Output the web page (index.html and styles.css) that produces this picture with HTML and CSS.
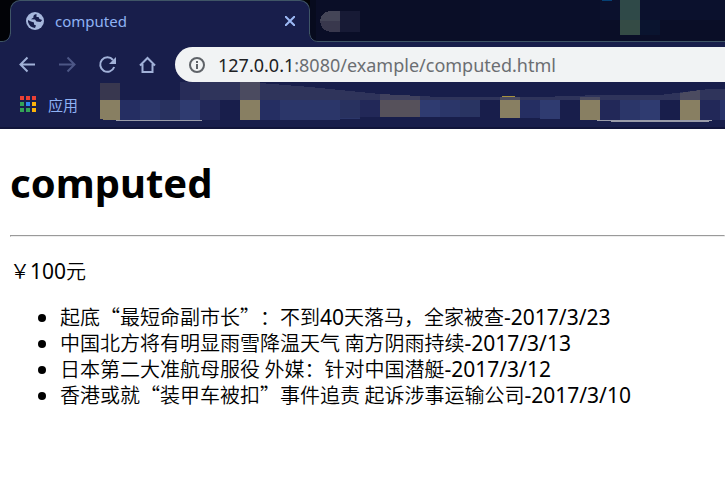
FILE: index.html
```html
<!DOCTYPE html>
<html lang="zh-CN">
<head>
<meta charset="utf-8">
<title>computed</title>
<link rel="stylesheet" href="styles.css">
</head>
<body>
<header class="browser">
  <div class="tabstrip">
    <svg class="strip-art" width="725" height="42" viewBox="0 0 725 42" shape-rendering="crispEdges" aria-hidden="true">
      <path fill="#070b1e" d="M310 0H725V41H310z"/>
      <path fill="#0a0e27" d="M316 0H480V41H316z"/>
      <path fill="#0a0f2a" d="M480 0H600V41H480z"/>
      <path fill="#0b112d" d="M600 0H725V20H600z"/>
      <path fill="#0a0e27" d="M600 20H725V41H600z"/>
      <path fill="#444557" d="M340 11V21H320C320 15 325 11 331 11z"/>
      <path fill="#39384d" d="M340 21V32H331C325 32 320 27 320 21z"/>
      <path fill="#171a35" d="M340 11H360V32H340z"/>
      <path fill="#2f4948" d="M620 0H640V20H620z"/>
      <path fill="#344b45" d="M620 20H640V35H620z"/>
      <path fill="#0a142f" d="M640 20H660V35H640z"/>
      <path fill="#064175" d="M602 0H612V1H602z"/>
      <g shape-rendering="auto">
        <path fill="#181e4b" d="M0 42C6 42 10 38 10 32L12 32V42zM309 32C309 38 313 42 320 42H308z"/>
        <path fill="none" stroke="#3f5566" d="M0 41.500H2C7 41.500 10.500 38 10.500 32M309.500 32C309.500 38 313 41.500 318 41.500H725"/>
      </g>
    </svg>
    <div class="tab">
      <svg width="18" height="18" viewBox="0 0 18 18" aria-hidden="true">
        <circle cx="9" cy="9" r="9" fill="#a6b7dc"/>
        <path fill="#181e4b" d="M10.500 2C8 2.500 7 3.500 7.500 5.500L5 7.200 9 7.500 10.500 9.500 14.500 10 16.200 8 13.500 7 12.500 5 10.500 5zM2 8 2 10C3 13.500 5 15.500 9 16L10 13.500 8 12.500 8 10.500 5 9.500z"/>
      </svg>
      <span class="tab-title">computed</span>
      <button class="close" aria-label="关闭"><svg width="10" height="10" viewBox="0 0 10 10"><path d="M0 0 10 10M10 0 0 10" stroke="#9cb9f5" stroke-width="2"/></svg></button>
    </div>
  </div>
  <nav class="toolbar">
    <button class="nav" aria-label="后退"><svg width="20" height="20" viewBox="0 0 20 20"><path d="M17 9.500H3M9.500 2.500 2.500 9.500l7 7"/></svg></button>
    <button class="nav" aria-label="前进" disabled><svg width="20" height="20" viewBox="0 0 20 20"><path d="M1 9.500H16M9.500 2.500l7 7-7 7"/></svg></button>
    <button class="nav" aria-label="重新加载"><svg width="20" height="20" viewBox="0 0 20 20"><path d="M15 5A7.200 7.200 0 1 0 16.200 12"/><path class="solid" d="M18 2V9H11z"/></svg></button>
    <button class="nav" aria-label="主页"><svg width="20" height="20" viewBox="0 0 20 20"><path d="M2 10.500 9.500 3l7.500 7.500M4.500 9V17H14.500V9"/></svg></button>
    <div class="address">
      <svg width="18" height="18" viewBox="0 0 18 18" aria-hidden="true"><circle cx="9" cy="9" r="7" fill="none" stroke="#5f6368" stroke-width="2"/><path d="M8 5h2v2H8zM8 8h2v5H8z" fill="#5f6368"/></svg>
      <a class="url" href="#"><span class="host">127.0.0.1</span>:8080/example/computed.html</a>
    </div>
  </nav>
  <div class="bookmarks">
    <svg class="mosaic" width="725" height="46" viewBox="0 0 725 46" shape-rendering="crispEdges" aria-hidden="true">
      <path fill="#38374f" d="M100 1H120V18H100z"/>
      <path fill="#272c58" d="M180 0H200V18H180z"/>
      <path fill="#2f345b" d="M200 0H240V18H200z"/>
      <path fill="#2f345b" d="M260 1 310 5 380 12 440 15H540L600 13H660L700 8 710 7H725V18H260z"/>
      <path fill="#4b4b60" d="M240 0H260V18H240zM500 15H520V18H500zM580 15H600V18H580zM680 11 700 8V18H680z"/>
      <path fill="#40415e" d="M380 12 420 14V18H380z"/>
      <path fill="#887f62" d="M100 18H120V38H103V37H100zM240 18H260V38H240zM500 18H520V36H500zM580 18H600V38H580zM680 18H700V38H680z"/>
      <path fill="#252e62" d="M120 18H140V38H120zM260 18H280V38H260zM520 18H540V36H520z"/>
      <path fill="#2b3669" d="M140 18H200V38H140zM280 18H360V37L320 38H280zM440 18H480V35H440zM620 18H640V38H620z"/>
      <path fill="#2f3b70" d="M180 18H200V38H180zM420 18H440V35H420zM540 18H560V37H540zM640 18H660V38H640z"/>
      <path fill="#28315f" d="M160 18H180V38H160zM340 18H360V36H340z"/>
      <path fill="#293462" d="M460 18H480V35H460z"/>
      <path fill="#222858" d="M200 18H220V38H200zM360 18H380V35H360zM600 18H620V38H600zM700 18H720V38H700z"/>
      <path fill="#28336a" d="M720 18H725V38H720z"/>
      <path fill="#56515b" d="M380 18H420V35H380z"/>
      <path fill="#a7923f" d="M502 14H515V15H502z"/>
      <path fill="#9a9ca9" d="M116 38H202V39H116zM597 38H712V39H597zM611 39H709V40H611z"/>
    </svg>
    <a class="apps" href="#">
      <svg width="17" height="17" viewBox="0 0 17 17" shape-rendering="crispEdges" aria-hidden="true">
        <path fill="#eb4034" d="M0 0h4v4H0zM6 0h4v4H6zM12 0h4v4H12z"/>
        <path fill="#33a457" d="M0 6h4v4H0zM0 12h4v4H0zM6 12h4v4H6z"/>
        <path fill="#2d87f0" d="M6 6h4v4H6z"/>
        <path fill="#fbb20b" d="M12 6h4v4H12zM12 12h4v4H12z"/>
      </svg>
      <span>应用</span>
    </a>
  </div>
</header>
<main class="page">
  <h1>computed</h1>
  <hr>
  <p class="price">￥<span class="latin">100</span>元</p>
  <ul class="news">
    <li>起底“最短命副市长”：不到<span class="latin">40</span>天落马，全家被查<span class="latin">-2017/3/23</span></li>
    <li>中国北方将有明显雨雪降温天气 南方阴雨持续<span class="latin">-2017/3/13</span></li>
    <li>日本第二大准航母服役 外媒：针对中国潜艇<span class="latin">-2017/3/12</span></li>
    <li>香港或就“装甲车被扣”事件追责 起诉涉事运输公司<span class="latin">-2017/3/10</span></li>
  </ul>
</main>
</body>
</html>
```

FILE: styles.css
```css
* { box-sizing: border-box; }
body {
  margin: 0;
  background: #fff;
  color: #000;
  font-family: "Noto Sans CJK SC", sans-serif;
  font-size: 20px;
  line-height: 26px;
  text-spacing-trim: space-all;
}
button { padding: 0; border: 0; background: none; }
a { color: inherit; text-decoration: none; }
svg { display: block; flex: none; }
.browser {
  background: #181e4b;
  border-bottom: 2px solid #11153a;
  overflow: hidden;
}
.tabstrip {
  position: relative;
  display: flex;
  height: 42px;
  padding-left: 10px;
  background: #020307;
}
.strip-art { position: absolute; top: 0; left: 0; }
.tab {
  position: relative;
  display: flex;
  align-items: center;
  width: 300px;
  height: 34px;
  padding: 6px 14px 0 15px;
  background: #181e4b;
  border: 1px solid #3f5566;
  border-bottom: 0;
  border-radius: 10px 10px 0 0;
}
.tabstrip::after {
  content: "";
  position: absolute;
  top: 34px;
  left: 11px;
  width: 298px;
  height: 8px;
  background: #181e4b;
}
.tab-title {
  flex: 1;
  margin-left: 11px;
  color: #8fb2f4;
  font-family: "Noto Sans", sans-serif;
  font-size: 15px;
}
.toolbar {
  display: flex;
  align-items: center;
  gap: 20px;
  padding: 5px 0 0 18px;
}
.nav svg {
  fill: none;
  stroke: #a1b1d8;
  stroke-width: 2;
}
.nav .solid { fill: #a1b1d8; stroke: none; }
.nav:disabled svg { stroke: #4d5786; }
.address {
  display: flex;
  flex: 1;
  align-items: center;
  gap: 12px;
  height: 35px;
  margin-left: -3px;
  padding-left: 13px;
  background: #f1f3f4;
  border-radius: 18px 0 0 18px;
}
.url {
  color: #6b6e72;
  font-family: "Noto Sans", sans-serif;
  font-size: 18px;
}
.host { color: #202124; }
.bookmarks {
  position: relative;
  display: flex;
  align-items: center;
  height: 45px;
  padding-left: 20px;
}
.mosaic { position: absolute; top: 0; left: 0; }
.apps {
  display: flex;
  align-items: center;
  gap: 11px;
  color: #8fb2f4;
  font-size: 15px;
}
.page {
  padding: 26px 0 0 10px;
  font-weight: 350;
}
h1 {
  margin: 0 0 24px;
  font-family: "Noto Sans", sans-serif;
  font-size: 40px;
  font-weight: 700;
  line-height: 56px;
}
hr { margin: 0 0 21px; }
.price { margin: 0 0 20px; }
.news { margin: 0; padding-left: 50px; }
.latin {
  font-family: "Noto Sans", sans-serif;
  font-size: 21px;
  font-weight: 400;
  line-height: 20px;
}
```
